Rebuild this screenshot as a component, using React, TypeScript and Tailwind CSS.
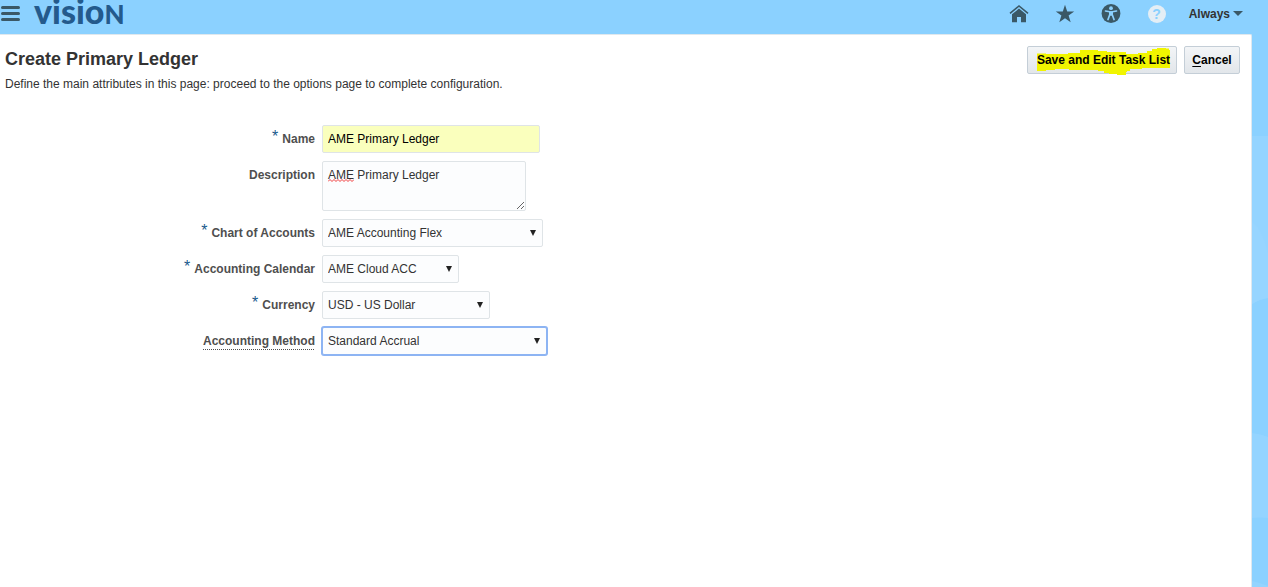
import { useState } from "react";
import type { ReactNode } from "react";

const HomeIcon = () => (
  <svg viewBox="0 0 20 20" width="20" height="20" fill="#3a5866">
    <path d="M1 9.300 10 2l9 7.300" fill="none" stroke="#3a5866" strokeWidth="1.600" />
    <path d="M10 4.600 17 10.300V18.300h-5V13H8v5.300H3v-8z" />
  </svg>
);

const StarIcon = () => (
  <svg viewBox="0 0 20 20" width="20" height="20" fill="#3a5866">
    <path d="M10 .8l2.200 6.600h7L13.600 11.500l2.100 6.800L10 14.200l-5.700 4.100 2.100-6.800L.8 7.400h7z" />
  </svg>
);

const AccessibilityIcon = () => (
  <svg viewBox="0 0 20 20" width="20" height="20">
    <circle cx="10" cy="9.500" r="9.400" fill="#3a5866" />
    <circle cx="10" cy="4.200" r="1.900" fill="#8bd1ff" />
    <path
      d="M4.500 7 10 8l5.500-1M9 10 7 15.500M11 10l2 5.500"
      fill="none"
      stroke="#8bd1ff"
      strokeWidth="1.700"
      strokeLinecap="round"
    />
    <path d="M8 7.500h4v4.200H8z" fill="#8bd1ff" />
  </svg>
);

const selects = [
  { id: "chart", label: "Chart of Accounts", value: "AME Accounting Flex", required: true, width: "w-[221px]" },
  { id: "calendar", label: "Accounting Calendar", value: "AME Cloud ACC", required: true, width: "w-[137px]" },
  { id: "currency", label: "Currency", value: "USD - US Dollar", required: true, width: "w-[168px]" },
  { id: "method", label: "Accounting Method", value: "Standard Accrual", required: false, width: "w-[225px]" },
];

const fieldClass = "block rounded-xs border bg-[#fcfdfe] px-[5px] text-xs text-[#333] outline-none";

type RowProps = {
  id: string;
  label: string;
  required?: boolean;
  hint?: boolean;
  children: ReactNode;
};

const Row = ({ id, label, required, hint, children }: RowProps) => (
  <div className="flex items-start">
    <div className="flex w-[315px] shrink-0 justify-end pt-1.5">
      {required && <span className="-mt-0.5 mr-1 text-base leading-4 text-[#1a5a8c]">*</span>}
      <label
        htmlFor={id}
        className={
          hint
            ? "text-xs leading-4 font-bold text-[#4f4f4f] underline decoration-dotted decoration-1 underline-offset-4"
            : "text-xs leading-4 font-bold text-[#4f4f4f]"
        }
      >
        {label}
      </label>
    </div>
    <div className="ml-[7px]">{children}</div>
  </div>
);

const App = () => {
  const [name, setName] = useState("AME Primary Ledger");
  const [description, setDescription] = useState("AME Primary Ledger");

  return (
    <div className="flex min-h-screen flex-col overflow-hidden bg-[#8bd1ff] font-['Liberation_Sans',Arial,sans-serif] text-xs text-[#333]">
      <header className="flex h-[34px] items-start justify-between pr-[25px]">
        <div className="flex items-start">
          <button type="button" aria-label="Navigator" className="flex flex-col gap-[3px] pt-[6px] pl-px">
            <span className="block h-[3px] w-[19px] rounded-xs bg-[#3a5866]" />
            <span className="block h-[3px] w-[19px] rounded-xs bg-[#3a5866]" />
            <span className="block h-[3px] w-[19px] rounded-xs bg-[#3a5866]" />
          </button>
          <div className="ml-[14px] font-['Lato',sans-serif] text-[34px] leading-[22px] font-black text-[#245a8c]">
            visio<span className="text-[26px]">N</span>
          </div>
        </div>
        <div className="flex h-[27px] items-center">
          <button type="button" aria-label="Home" className="mr-[26px]">
            <HomeIcon />
          </button>
          <button type="button" aria-label="Favorites" className="mr-[26px]">
            <StarIcon />
          </button>
          <button type="button" aria-label="Accessibility" className="mr-[27px]">
            <AccessibilityIcon />
          </button>
          <button
            type="button"
            className="mr-[23px] h-[18px] w-[18px] rounded-full bg-[#e4eef5] text-sm leading-[18px] font-bold text-[#8bd1ff]"
          >
            ?
          </button>
          <button type="button" className="flex items-center gap-[3px] font-bold">
            Always
            <svg viewBox="0 0 10 5" width="10" height="5" fill="#3a5866">
              <path d="M0 0h10L5 5z" />
            </svg>
          </button>
        </div>
      </header>

      <div className="relative flex grow pr-4">
        <svg
          className="absolute top-0 right-0 h-[553px] w-4"
          viewBox="0 0 16 553"
          preserveAspectRatio="none"
          fill="#94d4ff"
        >
          <path d="M0 102h16v162q-8 1-16 6z" />
          <path d="M0 187q11 10 16 32v45q-8 1-16 6z" fill="#97d5ff" />
          <path d="M0 399q9 1 16 4v81q-8-1-16 0z" />
          <path d="M0 547q9 2 16 5v1H0z" />
        </svg>
        <main className="relative grow rounded-tr-xs border-t border-r border-[#dfe8ee] bg-white pl-[5px]">
          <div className="flex items-start justify-between pr-[11px]">
            <div className="pt-3">
              <h1 className="text-lg leading-6 font-bold">Create Primary Ledger</h1>
              <p className="mt-[5px] leading-4">
                Define the main attributes in this page: proceed to the options page to complete configuration.
              </p>
            </div>
            <div className="flex gap-[7px] pt-[11px] text-black">
              <button
                type="button"
                className="relative h-7 w-[150px] rounded-xs border border-[#c4ced7] bg-linear-to-b from-[#f3f5f7] to-[#e2e6ea] pl-[3px] font-bold"
              >
                <svg className="absolute top-px left-[9px]" viewBox="0 0 133 27" width="133" height="27" fill="#f1f500">
                  <path d="M0 5.500h9V6h22V5h12V2h18v1h9v1h19v2h12V5h9V3h5V1h5V0h9v.5h3V2h1v18h-28v1h-12v2h-3v1h-1v3H80v-1h-8v-1h-5v-2h-6v-1H32v-1H18v1H9v1H0z" />
                </svg>
                <span className="relative">Save and Edit Task List</span>
              </button>
              <button
                type="button"
                className="h-7 w-14 rounded-xs border border-[#c4ced7] bg-linear-to-b from-[#f3f5f7] to-[#e2e6ea] font-bold"
              >
                <span className="underline underline-offset-2">C</span>ancel
              </button>
            </div>
          </div>

          <form className="-ml-[5px] mt-[33px] flex flex-col gap-2">
            <Row id="name" label="Name" required>
              <input
                id="name"
                value={name}
                onChange={(e) => setName(e.target.value)}
                className="block h-7 w-[218px] rounded-xs border border-[#dfe4e7] bg-[#faffbd] px-[5px] text-xs text-black outline-none"
              />
            </Row>
            <Row id="description" label="Description">
              <div className="relative">
                <textarea
                  id="description"
                  value={description}
                  spellCheck={false}
                  onChange={(e) => setDescription(e.target.value)}
                  className={`${fieldClass} h-[50px] w-[204px] resize border-[#dfe4e7] py-[5px] leading-4`}
                />
                <svg
                  className="pointer-events-none absolute top-[18px] left-[6px]"
                  viewBox="0 0 26 3"
                  width="26"
                  height="3"
                  fill="none"
                  stroke="#f03a3a"
                >
                  <path d="M0 2.500l2-2 2 2 2-2 2 2 2-2 2 2 2-2 2 2 2-2 2 2 2-2 2 2 2-2" />
                </svg>
              </div>
            </Row>
            {selects.map(({ id, label, value, required, width }) => (
              <Row key={id} id={id} label={label} required={required} hint={!required}>
                <div className="relative">
                  <select
                    id={id}
                    defaultValue={value}
                    className={`${fieldClass} ${width} h-7 appearance-none ${
                      required ? "border-[#dfe4e7]" : "border-[#8db4f3] ring-1 ring-[#8db4f3]"
                    }`}
                  >
                    <option>{value}</option>
                  </select>
                  <svg
                    className="pointer-events-none absolute top-[11px] right-[7px]"
                    viewBox="0 0 7 7"
                    width="6"
                    height="6"
                    fill="#222"
                  >
                    <path d="M0 0h7L3.500 7z" />
                  </svg>
                </div>
              </Row>
            ))}
          </form>
        </main>
      </div>
    </div>
  );
};

export default App;
